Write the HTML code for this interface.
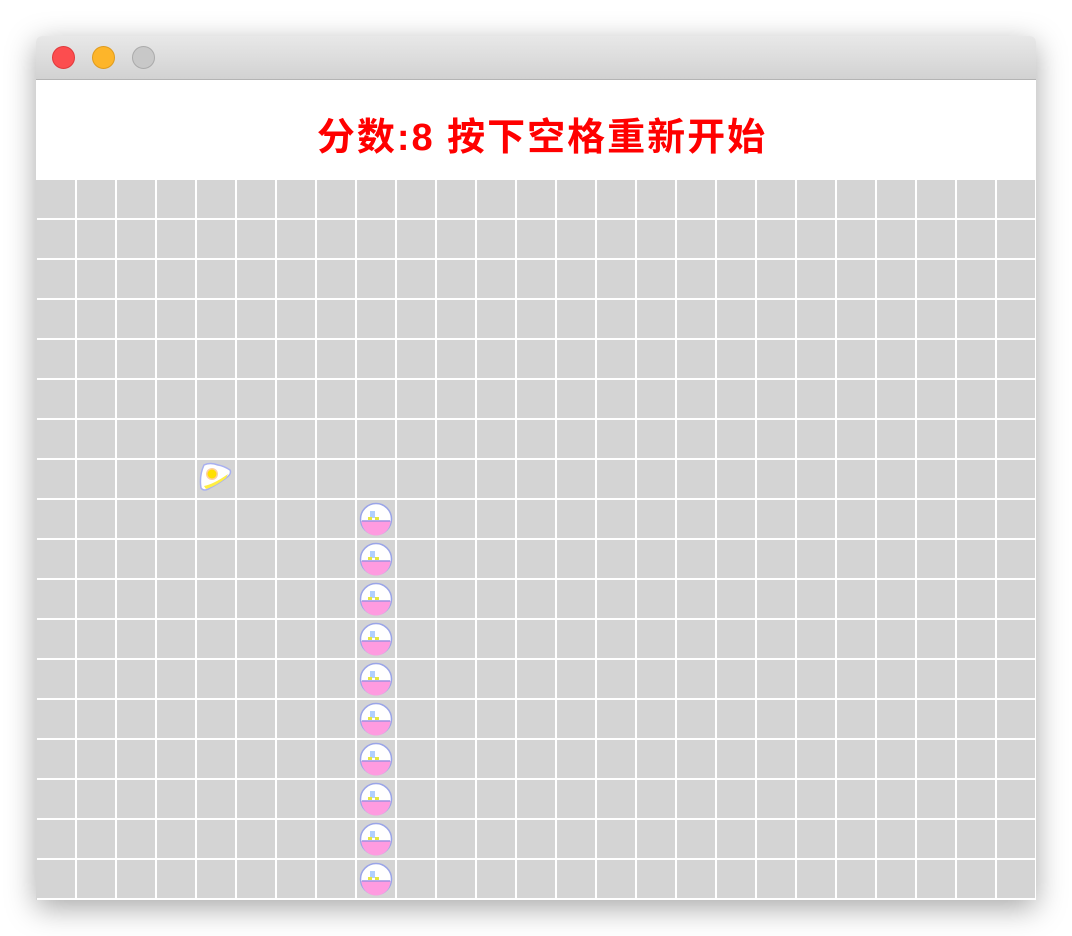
<!DOCTYPE html>
<html><head><meta charset="utf-8"><style>
body{margin:0;width:1072px;height:936px;background:#fff;position:relative;overflow:hidden;font-family:"Liberation Sans","Noto Sans CJK SC",sans-serif}
.win{position:absolute;left:36px;top:36px;width:1000px;height:864px;box-shadow:0 8px 30px rgba(0,0,0,.35);border-radius:6px 6px 0 0;overflow:hidden;background:#fff}
.tb{height:43px;background:linear-gradient(#e8e8e8,#d2d2d2);border-bottom:1px solid #b4b4b4}
.d{position:absolute;top:10px;width:23px;height:23px;border-radius:50%;box-sizing:border-box}
.title{position:absolute;top:44px;left:6px;width:1000px;height:100px;text-align:center;line-height:116px;color:#f00;font-weight:bold;font-size:38px;letter-spacing:2px}
.grid{position:absolute;top:144px;left:0;width:1000px;height:720px;background-color:#d4d4d4;
background-image:linear-gradient(to right,#fff 1px,transparent 1px,transparent 39px,#fff 39px),linear-gradient(to bottom,transparent 38px,#fff 38px,#fff 40px,transparent 40px);background-size:40px 40px}
.grid::before{content:"";position:absolute;left:0;top:0;width:1px;height:720px;background:#d4d4d4}
</style></head><body>
<div class="win">
<div class="tb"></div>
<div class="d" style="left:16px;background:#fc4d4f;border:1px solid #e0393b"></div>
<div class="d" style="left:56px;background:#fdb52a;border:1px solid #df9b1d"></div>
<div class="d" style="left:96px;background:#c8c8c8;border:1px solid #aaa"></div>
<div class="title">分数:8 按下空格重新开始</div>
<div class="grid">
<svg style="position:absolute;left:162px;top:282px" width="36" height="32" viewBox="0 0 36 32"><path d="M6 3 Q12 0 20 3 Q26 4 32 8 Q34 12 28 16 Q20 22 12 26 Q6 30 3 26 Q1 14 6 3Z" fill="#fff" stroke="#a8b0f0" stroke-width="1.5"/><path d="M6 24 Q16 22 30 12 L28 16 Q18 24 8 27Z" fill="#ffee44"/><circle cx="14" cy="12" r="6" fill="#ffd0a0"/><circle cx="14" cy="12" r="4.5" fill="#ffe000"/></svg>
</div>
</div>
<svg width="0" height="0" style="position:absolute"><defs><g id="b"><circle cx="16" cy="16" r="15.5" fill="#fff" stroke="#9aa4e8" stroke-width="1.5"/><path d="M1.5 18 H30.5 A14.5 14.5 0 0 1 1.5 18Z" fill="#ff9be0"/><line x1="2" y1="18" x2="30" y2="18" stroke="#a090e0" stroke-width="1.5"/><rect x="10" y="8" width="5" height="7" fill="#b0d0ff"/><rect x="8" y="14" width="4" height="3" fill="#e6e640"/><rect x="15" y="14" width="4" height="3" fill="#e6e640"/></g></defs></svg>
<svg style="position:absolute;left:0;top:0" width="1072" height="936">
<use href="#b" x="360" y="503"/><use href="#b" x="360" y="543"/><use href="#b" x="360" y="583"/><use href="#b" x="360" y="623"/><use href="#b" x="360" y="663"/><use href="#b" x="360" y="703"/><use href="#b" x="360" y="743"/><use href="#b" x="360" y="783"/><use href="#b" x="360" y="823"/><use href="#b" x="360" y="863"/>
</svg>
</body></html>
